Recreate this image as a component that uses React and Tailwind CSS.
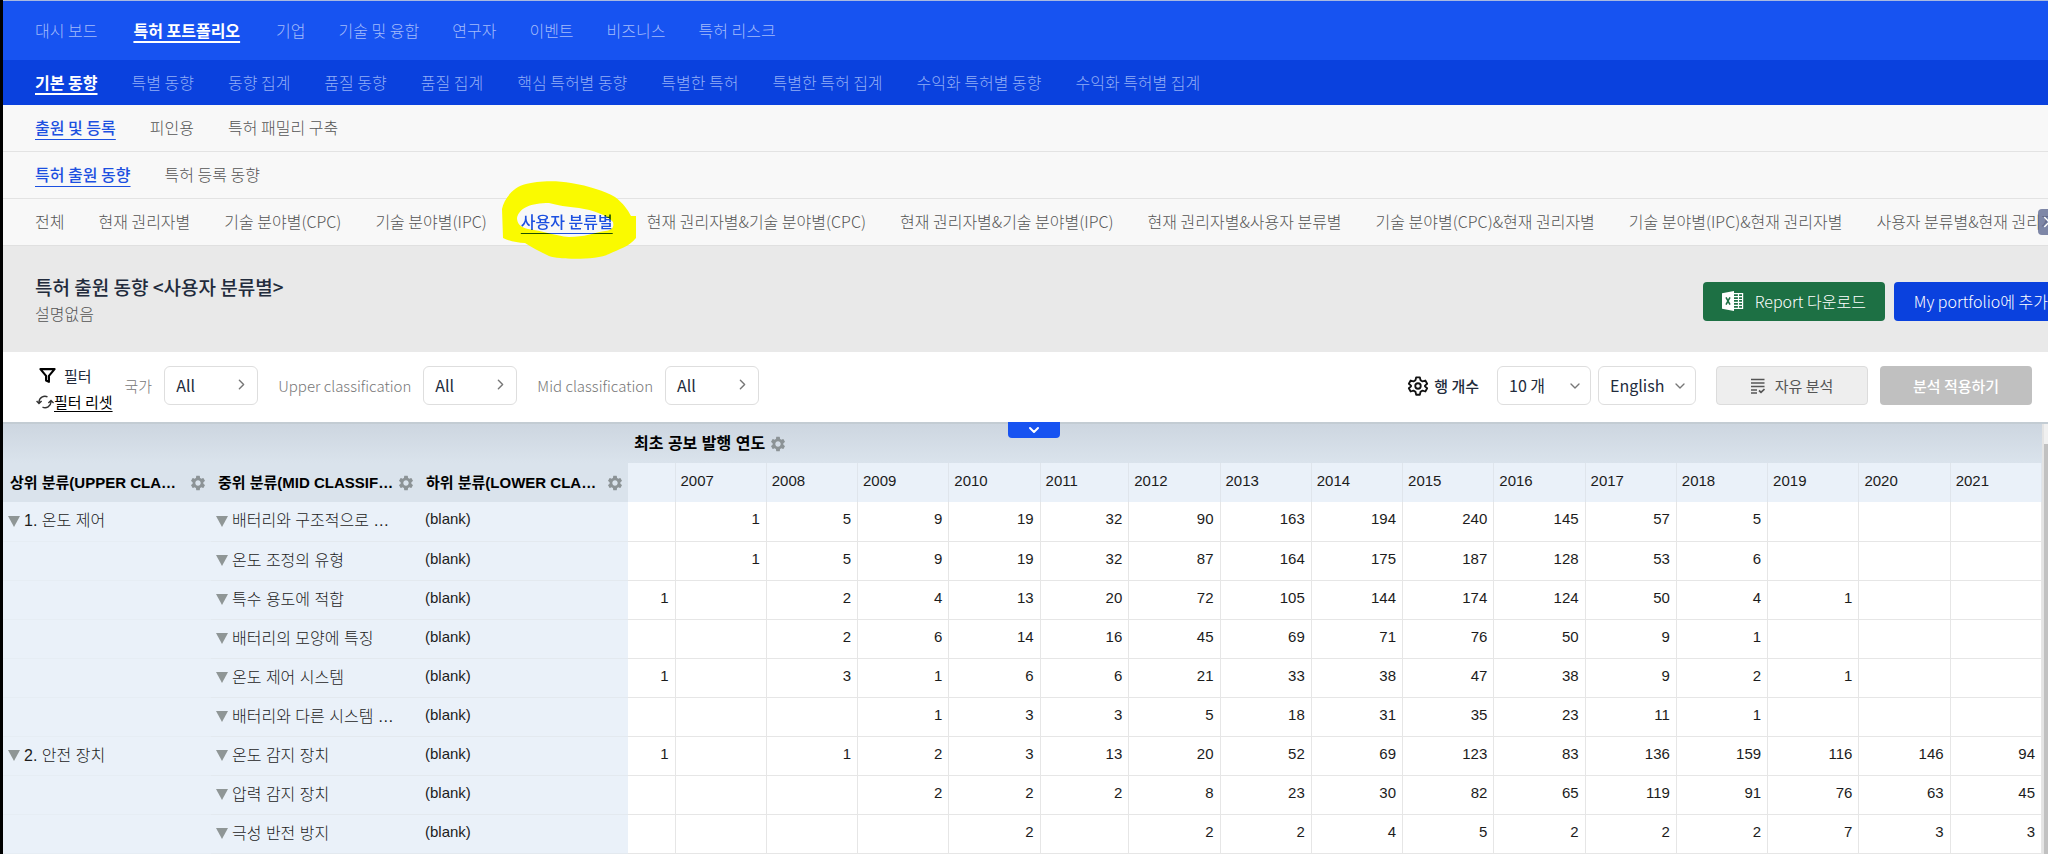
import { FiFilter } from 'react-icons/fi';
import { LuChevronDown, LuChevronRight } from 'react-icons/lu';
import { MdSettings } from 'react-icons/md';

const MAIN_MENU = ['대시 보드', '특허 포트폴리오', '기업', '기술 및 융합', '연구자', '이벤트', '비즈니스', '특허 리스크'];
const SUB_MENU = [
  '기본 동향', '특별 동향', '동향 집계', '품질 동향', '품질 집계', '핵심 특허별 동향',
  '특별한 특허', '특별한 특허 집계', '수익화 특허별 동향', '수익화 특허별 집계',
];
const GROUP_TABS = ['출원 및 등록', '피인용', '특허 패밀리 구축'];
const TREND_TABS = ['특허 출원 동향', '특허 등록 동향'];
const CLASS_TABS = [
  '전체', '현재 권리자별', '기술 분야별(CPC)', '기술 분야별(IPC)', '사용자 분류별',
  '현재 권리자별&기술 분야별(CPC)', '현재 권리자별&기술 분야별(IPC)', '현재 권리자별&사용자 분류별',
  '기술 분야별(CPC)&현재 권리자별', '기술 분야별(IPC)&현재 권리자별', '사용자 분류별&현재 권리자별',
];

const FILTERS = [
  { id: 'country', label: '국가' },
  { id: 'upper', label: 'Upper classification' },
  { id: 'mid', label: 'Mid classification' },
];

const HEADERS = ['상위 분류(UPPER CLA…', '중위 분류(MID CLASSIF…', '하위 분류(LOWER CLA…'];
const YEARS = ['', 2007, 2008, 2009, 2010, 2011, 2012, 2013, 2014, 2015, 2016, 2017, 2018, 2019, 2020, 2021];

const ROWS = [
  { upper: '1. 온도 제어', mid: '배터리와 구조적으로 …', values: ['', 1, 5, 9, 19, 32, 90, 163, 194, 240, 145, 57, 5, '', '', ''] },
  { mid: '온도 조정의 유형', values: ['', 1, 5, 9, 19, 32, 87, 164, 175, 187, 128, 53, 6, '', '', ''] },
  { mid: '특수 용도에 적합', values: [1, '', 2, 4, 13, 20, 72, 105, 144, 174, 124, 50, 4, 1, '', ''] },
  { mid: '배터리의 모양에 특징', values: ['', '', 2, 6, 14, 16, 45, 69, 71, 76, 50, 9, 1, '', '', ''] },
  { mid: '온도 제어 시스템', values: [1, '', 3, 1, 6, 6, 21, 33, 38, 47, 38, 9, 2, 1, '', ''] },
  { mid: '배터리와 다른 시스템 …', values: ['', '', '', 1, 3, 3, 5, 18, 31, 35, 23, 11, 1, '', '', ''] },
  { upper: '2. 안전 장치', mid: '온도 감지 장치', values: [1, '', 1, 2, 3, 13, 20, 52, 69, 123, 83, 136, 159, 116, 146, 94] },
  { mid: '압력 감지 장치', values: ['', '', '', 2, 2, 2, 8, 23, 30, 82, 65, 119, 91, 76, 63, 45] },
  { mid: '극성 반전 방지', values: ['', '', '', '', 2, '', 2, 2, 4, 5, 2, 2, 2, 7, 3, 3] },
];

function Marker() {
  return (
    <svg
      viewBox="0 0 136 78"
      className="pointer-events-none absolute -top-7 -left-5 h-[78px] w-[136px] max-w-none mix-blend-multiply"
      aria-hidden="true"
    >
      <path
        fill="#fafa00"
        fillRule="evenodd"
        d="M1 28C3 18 12 6 25 3C35 0 55 -1 70 2C88 5 104 10 114 16C122 22 127 29 130 35H135V57C128 66 118 68 108 73C96 79 60 79 48 75C38 70 30 66 24 62C16 62 8 60 2 57ZM16 37C18 27 30 22 48 22C56 24 66 26 78 27C92 29 106 34 112 41C113 46 112 49 104 50C92 52 84 56 68 56C54 55 44 50 27 48C19 46 16 42 16 37Z"
      />
    </svg>
  );
}

function Tabs({ label, items, active, className, activeClass, marked }) {
  return (
    <nav aria-label={label} className={`flex items-center pb-[2px] pl-8 whitespace-nowrap ${className}`}>
      {items.map((item) => (
        <a key={item} href="#" className={item === active ? `relative ${activeClass}` : 'font-light'}>
          {item}
          {marked && item === active && <Marker />}
        </a>
      ))}
    </nav>
  );
}

function ExcelIcon() {
  return (
    <svg viewBox="0 0 22 20" className="h-5 w-[22px]" aria-hidden="true">
      <path fill="#fff" d="M0 2.2L12 0V20L0 17.8Z" />
      <path fill="none" stroke="#fff" strokeWidth="1.2" d="M12 2.7H20.6V17.3H12M12 5.6H21M12 8.5H21M12 11.4H21M12 14.3H21M16.5 2.7V17.3" />
      <path fill="none" stroke="#1d7044" strokeWidth="1.6" d="M4 6.4L8 13.6M8 6.4L4 13.6" />
    </svg>
  );
}

function ListCheckIcon() {
  return (
    <svg viewBox="0 0 14 16" className="h-4 w-[14px]" fill="none" stroke="currentColor" strokeWidth="1.7" aria-hidden="true">
      <path d="M0 1.5H13.5M0 5H13.5M0 8.5H13.5M0 12H6M0 15H6M8 12.5L10 14.3L13.5 11" />
    </svg>
  );
}

function ResetIcon() {
  return (
    <svg viewBox="0 0 18 14" className="h-[14px] w-[18px]" fill="none" stroke="#333" strokeWidth="1.4" aria-hidden="true">
      <path d="M3 8.5V7A6 6 0 0 1 11.5 1.8M0.6 6L3 8.6L5.6 6M15 5.5V7A6 6 0 0 1 6.5 12.2M12.4 8L15 5.4L17.6 8" />
    </svg>
  );
}

function GearIcon() {
  return (
    <svg viewBox="0 0 24 24" className="h-[22px] w-[22px]" fill="none" stroke="#111" strokeWidth="2" strokeLinejoin="round" aria-hidden="true">
      <path d="M10 2.5H14L14.7 5.6L17 7L20 6L22 9.5L19.6 11.6V12.4L22 14.5L20 18L17 17L14.7 18.4L14 21.5H10L9.3 18.4L7 17L4 18L2 14.5L4.4 12.4V11.6L2 9.5L4 6L7 7L9.3 5.6Z" />
      <circle cx="12" cy="12" r="3" />
    </svg>
  );
}

function Branch({ children }) {
  return (
    <span className="flex items-center gap-1 whitespace-nowrap">
      <svg viewBox="0 0 12 11" className="h-[11px] w-3 shrink-0" aria-hidden="true">
        <path fill="#8f9696" d="M0 0H12L6 11Z" />
      </svg>
      {children}
    </span>
  );
}

function Select({ id, value, className }) {
  return (
    <span className={`relative flex items-center ${className}`}>
      <select
        id={id}
        defaultValue={value}
        aria-label={id}
        className="h-[39px] w-full appearance-none rounded-md border border-[#dedede] bg-white pb-[2px] pl-[11px] text-base text-[#222b3c]"
      >
        <option>{value}</option>
      </select>
      <LuChevronDown size={16} className="pointer-events-none absolute right-2 text-[#777]" />
    </span>
  );
}

export default function App() {
  return (
    <div className="min-h-screen overflow-hidden border-l-3 border-black bg-white font-['Noto_Sans_CJK_KR',sans-serif] text-base leading-6">
      <header>
        <Tabs
          label="main"
          items={MAIN_MENU}
          active="특허 포트폴리오"
          className="h-[60px] gap-[33px] border-t border-[#a9b9e0] bg-[#1753f1] text-[#a3bbfb]"
          activeClass="mx-[3px] font-bold text-white underline decoration-2 underline-offset-4"
        />
        <Tabs
          label="sub"
          items={SUB_MENU}
          active="기본 동향"
          className="h-[45px] gap-[34px] bg-[#0a41de] text-[#92aef6]"
          activeClass="font-bold text-white underline decoration-2 underline-offset-4"
        />
        <Tabs
          label="group"
          items={GROUP_TABS}
          active="출원 및 등록"
          className="h-[47px] gap-[34px] border-b border-[#e3e3e3] bg-[#f8f8f8] text-[#555]"
          activeClass="font-medium text-[#1c50e0] underline underline-offset-5"
        />
        <Tabs
          label="trend"
          items={TREND_TABS}
          active="특허 출원 동향"
          className="h-[47px] gap-[34px] border-b border-[#e3e3e3] bg-[#f8f8f8] text-[#555]"
          activeClass="font-medium text-[#1c50e0] underline underline-offset-5"
        />
        <div className="relative">
          <Tabs
            label="classification"
            items={CLASS_TABS}
            active="사용자 분류별"
            marked
            className="h-[47px] gap-[34px] border-b border-[#e0e0e0] bg-[#f8f8f8] text-[#555]"
            activeClass="z-10 font-medium text-[#1c50e0] underline underline-offset-5"
          />
          <button
            type="button"
            aria-label="next tabs"
            className="absolute top-[10px] -right-3 flex h-[26px] w-[22px] items-center rounded bg-[#5f6a92]/80 text-white"
          >
            <LuChevronRight size={18} />
          </button>
        </div>
      </header>

      <section className="flex h-[106px] items-center justify-between bg-[#e9e9e9] pl-8">
        <div>
          <h1 className="text-[19px] leading-7 font-medium text-[#222b3c]">특허 출원 동향 &lt;사용자 분류별&gt;</h1>
          <p className="font-light text-[#555]">설명없음</p>
        </div>
        <div className="-mr-5 flex gap-[9px] pt-1 font-light text-white">
          <button type="button" className="flex h-[39px] w-[182px] items-center justify-center gap-[11px] rounded bg-[#1d7044]">
            <ExcelIcon />
            Report 다운로드
          </button>
          <button type="button" className="h-[39px] rounded bg-[#0a41de] px-5 whitespace-nowrap">
            My portfolio에 추가
          </button>
        </div>
      </section>

      <section className="flex h-[70px] items-center justify-between bg-white pr-4 pb-[3px] pl-[33px] whitespace-nowrap">
        <div className="flex items-center">
          <div className="mr-3 pt-[6px] text-[15px] leading-[26px] text-[#222b3c]">
            <div className="flex items-center gap-2 pl-[3px]">
              <FiFilter size={17} strokeWidth={3} className="text-black" />
              필터
            </div>
            <button type="button" className="flex items-center text-black">
              <ResetIcon />
              <span className="underline underline-offset-3">필터 리셋</span>
            </button>
          </div>
          {FILTERS.map(({ id, label }) => (
            <div key={id} className="mr-5 flex items-center gap-3">
              <span id={id} className="text-[15px] font-light text-[#777]">{label}</span>
              <button
                type="button"
                aria-labelledby={id}
                className="flex h-[39px] w-[94px] items-center justify-between rounded-md border border-[#dedede] pr-[7px] pb-[2px] pl-[11px] text-[#222b3c]"
              >
                All
                <LuChevronRight size={17} className="text-[#777]" />
              </button>
            </div>
          ))}
        </div>
        <div className="flex items-center">
          <GearIcon />
          <label htmlFor="rows" className="mr-[18px] ml-[5px] text-[15px] font-medium text-[#222b3c]">행 개수</label>
          <Select id="rows" value="10 개" className="mr-[7px] w-[94px]" />
          <Select id="language" value="English" className="mr-5 w-[98px]" />
          <button type="button" className="mr-3 flex h-[39px] w-[152px] items-center justify-center gap-[10px] rounded border border-[#dcdcdc] bg-[#eee] text-[15px] text-[#555]">
            <ListCheckIcon />
            자유 분석
          </button>
          <button type="button" className="h-[39px] w-[152px] rounded bg-[#c0c0c0] text-[15px] font-medium text-white">
            분석 적용하기
          </button>
        </div>
      </section>

      <main className="relative flex border-t-2 border-[#c3ccd3]">
        <button
          type="button"
          aria-label="expand"
          className="absolute -top-[2px] left-[1005px] flex h-4 w-[52px] items-center justify-center rounded-b-sm bg-[#1753f1] text-white"
        >
          <LuChevronDown size={16} strokeWidth={3} />
        </button>
        <table className="flex-1 table-fixed border-collapse font-['Liberation_Sans','Noto_Sans_CJK_KR',sans-serif] text-[15px] leading-5 text-[#1c1c1c]">
          <colgroup>
            <col className="w-[208px]" />
            <col className="w-[208px]" />
            <col className="w-[209px]" />
            <col className="w-[47px]" />
            {YEARS.slice(1).map((year) => <col key={year} />)}
          </colgroup>
          <thead className="text-left">
            <tr className="h-[39px] bg-linear-to-b from-[#cdd6e0] to-[#dae3ec]">
              <th colSpan={3} />
              <th colSpan={16} className="pl-[6px] text-base text-black">
                <span className="flex items-center gap-1">
                  최초 공보 발행 연도
                  <MdSettings size={18} className="text-[#8c9396]" />
                </span>
              </th>
            </tr>
            <tr className="h-[39px] bg-[#eaf1f9]">
              {HEADERS.map((text) => (
                <th key={text} className="bg-[#dae3ec] pr-1 pl-[7px] text-black">
                  <span className="flex items-center justify-between whitespace-nowrap">
                    {text}
                    <MdSettings size={18} className="text-[#8c9396]" />
                  </span>
                </th>
              ))}
              {YEARS.map((year) => (
                <th key={year} className="border-r border-[#dfe5ec] pb-1 pl-[5px] font-normal">{year}</th>
              ))}
            </tr>
          </thead>
          <tbody>
            {ROWS.map(({ upper, mid, values }) => (
              <tr key={mid} className="h-[39px]">
                <td className="border-b border-[#e6edf4] bg-[#eaf1f9] pl-[5px] text-base font-light">
                  {upper && <Branch>{upper}</Branch>}
                </td>
                <td className="border-b border-[#e3e9ef] bg-[#eaf1f9] pl-[5px] text-base font-light">
                  <Branch>{mid}</Branch>
                </td>
                <td className="border-b border-[#e3e9ef] bg-[#eaf1f9] pb-1 pl-[6px]">(blank)</td>
                {values.map((value, i) => (
                  <td key={i} className="border-r border-b border-[#e6e6e6] pr-[6px] pb-1 text-right">{value}</td>
                ))}
              </tr>
            ))}
          </tbody>
        </table>
        <div className="w-[6px] border-l-2 border-[#e4e4e4] bg-[#f0f0f0] pt-5">
          <div className="h-full bg-[#c1c1c1]" />
        </div>
      </main>
    </div>
  );
}
